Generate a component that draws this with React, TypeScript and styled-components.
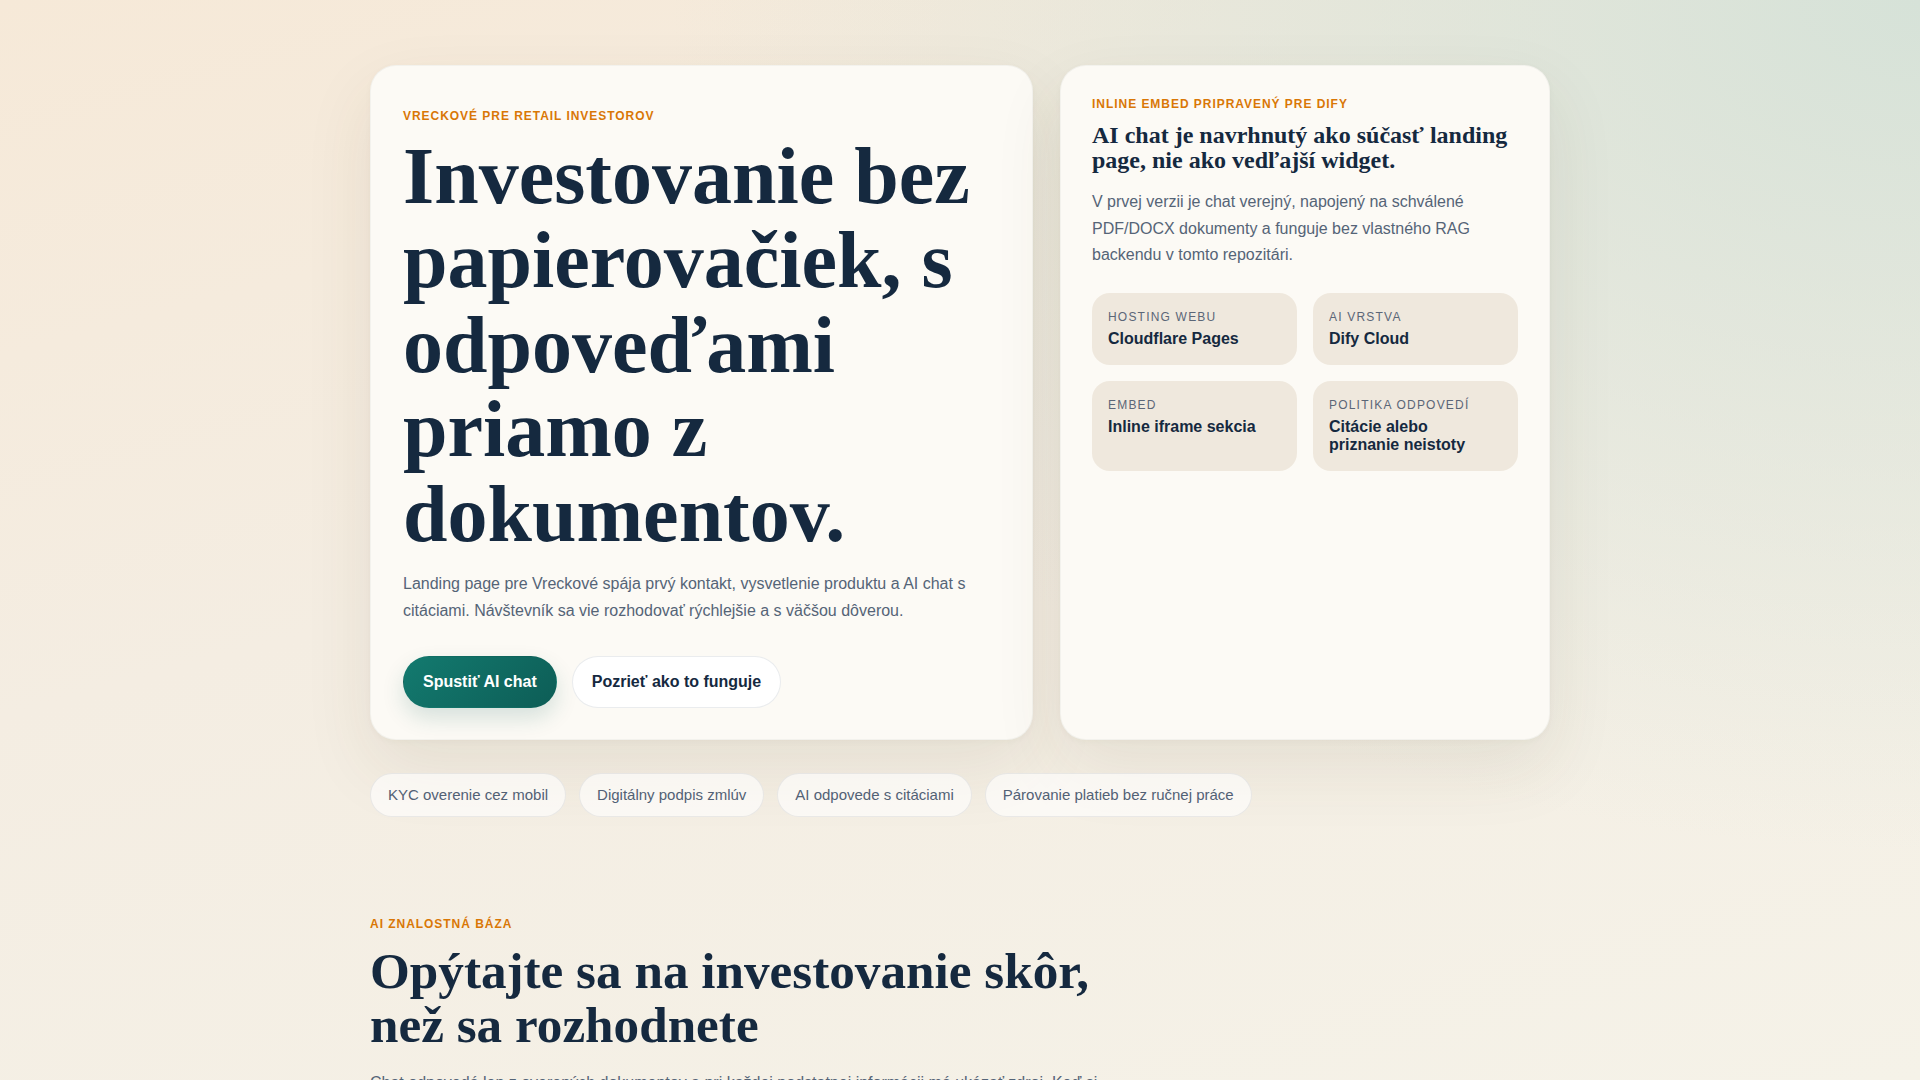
import styled, { createGlobalStyle } from "styled-components";

const Colors = {
  Navy: "#15293f",
  Slate: "#556477",
  Muted: "#5b6677",
  Orange: "#d97706",
  Card: "#fcfaf5",
  Fact: "#efe8dd",
};

const GlobalStyle = createGlobalStyle`
  * {
    box-sizing: border-box;
  }
  html, body {
    margin: 0;
    min-height: 100%;
  }
  body {
    font-family: "Liberation Sans", Arial, sans-serif;
    color: ${Colors.Navy};
    background:
      radial-gradient(ellipse 1250px 850px at 100% 0%, rgba(214, 226, 216, 1) 0%, rgba(214, 226, 216, 0) 100%),
      linear-gradient(165deg, #f6e9d8 0%, #f4ede2 45%, #f5f2e8 100%);
    background-attachment: fixed;
  }
`;

const facts = [
  { label: "Hosting webu", value: "Cloudflare Pages" },
  { label: "AI vrstva", value: "Dify Cloud" },
  { label: "Embed", value: "Inline iframe sekcia" },
  { label: "Politika odpovedí", value: "Citácie alebo priznanie neistoty" },
];

const chips = [
  "KYC overenie cez mobil",
  "Digitálny podpis zmlúv",
  "AI odpovede s citáciami",
  "Párovanie platieb bez ručnej práce",
];

export default function App() {
  return (
    <>
      <GlobalStyle />
      <Page>
        <Container>
          <HeroGrid>
            <HeroCard>
              <Eyebrow>Vreckové pre retail investorov</Eyebrow>
              <HeroTitle>
                Investovanie bez papierovačiek, s odpoveďami priamo z dokumentov.
              </HeroTitle>
              <Lead>
                Landing page pre Vreckové spája prvý kontakt, vysvetlenie produktu a AI chat s
                citáciami. Návštevník sa vie rozhodovať rýchlejšie a s väčšou dôverou.
              </Lead>
              <Actions>
                <Button variant="primary">Spustiť AI chat</Button>
                <Button variant="ghost">Pozrieť ako to funguje</Button>
              </Actions>
            </HeroCard>

            <SideCard>
              <Eyebrow>Inline embed pripravený pre Dify</Eyebrow>
              <SideTitle>AI chat je navrhnutý ako súčasť landing page, nie ako vedľajší widget.</SideTitle>
              <SideText>
                V prvej verzii je chat verejný, napojený na schválené PDF/DOCX dokumenty a funguje
                bez vlastného RAG backendu v tomto repozitári.
              </SideText>
              <FactGrid>
                {facts.map((fact) => (
                  <Fact key={fact.label}>
                    <FactLabel>{fact.label}</FactLabel>
                    <FactValue>{fact.value}</FactValue>
                  </Fact>
                ))}
              </FactGrid>
            </SideCard>
          </HeroGrid>

          <ChipRow>
            {chips.map((chip) => (
              <Chip key={chip}>{chip}</Chip>
            ))}
          </ChipRow>

          <KnowledgeSection>
            <Eyebrow>AI znalostná báza</Eyebrow>
            <SectionTitle>Opýtajte sa na investovanie skôr, než sa rozhodnete</SectionTitle>
            <SectionText>
              Chat odpovedá len z overených dokumentov a pri každej podstatnej informácii má ukázať
              zdroj. Keď si odpoveďou nie je istý, povie to otvorene a odporučí kontakt s tímom
              Vreckového.
            </SectionText>
          </KnowledgeSection>
        </Container>
      </Page>
    </>
  );
}

const Page = styled.main`
  min-height: 100vh;
  padding: 65px 0 120px;
`;

const Container = styled.div`
  width: 1180px;
  margin: 0 auto;
`;

const HeroGrid = styled.section`
  display: grid;
  grid-template-columns: 663px 1fr;
  gap: 27px;
  align-items: stretch;
`;

const Card = styled.div`
  background: ${Colors.Card};
  border: 1px solid rgba(23, 41, 63, 0.04);
  border-radius: 26px;
  box-shadow: 0 28px 70px rgba(74, 62, 38, 0.09), 0 2px 6px rgba(74, 62, 38, 0.03);
`;

const HeroCard = styled(Card)`
  padding: 43px 32px 31px;
`;

const SideCard = styled(Card)`
  padding: 31px;
`;

const Eyebrow = styled.p`
  margin: 0;
  font-size: 12px;
  line-height: 14px;
  font-weight: 700;
  letter-spacing: 0.08em;
  text-transform: uppercase;
  color: ${Colors.Orange};
`;

const HeroTitle = styled.h1`
  margin: 11px 0 15px;
  font-family: "Liberation Serif", "Times New Roman", serif;
  font-size: 80px;
  line-height: 1.056;
  font-weight: 700;
  color: ${Colors.Navy};
`;

const Lead = styled.p`
  margin: 0;
  font-size: 16px;
  line-height: 1.65;
  color: ${Colors.Slate};
`;

const Actions = styled.div`
  display: flex;
  gap: 15px;
  margin-top: 32px;
`;

const Button = styled.button<{ variant: "primary" | "ghost" }>`
  height: 52px;
  padding: 0 19px;
  border-radius: 999px;
  font-family: inherit;
  font-size: 16px;
  font-weight: 700;
  cursor: pointer;
  border: 1px solid
    ${({ variant }) => (variant === "primary" ? "transparent" : "rgba(23, 41, 63, 0.09)")};
  background: ${({ variant }) =>
    variant === "primary" ? "linear-gradient(135deg, #137a6f 0%, #0d5d56 100%)" : "#ffffff"};
  color: ${({ variant }) => (variant === "primary" ? "#ffffff" : Colors.Navy)};
  box-shadow: ${({ variant }) =>
    variant === "primary" ? "0 10px 22px rgba(13, 93, 86, 0.16)" : "none"};
`;

const SideTitle = styled.h2`
  margin: 12px 0 16px;
  font-family: "Liberation Serif", "Times New Roman", serif;
  font-size: 24px;
  line-height: 1.05;
  font-weight: 700;
  color: ${Colors.Navy};
`;

const SideText = styled.p`
  margin: 0;
  font-size: 16px;
  line-height: 1.65;
  color: ${Colors.Slate};
`;

const FactGrid = styled.div`
  display: grid;
  grid-template-columns: 1fr 1fr;
  gap: 16px;
  margin-top: 24px;
`;

const Fact = styled.div`
  background: ${Colors.Fact};
  border-radius: 18px;
  padding: 16px 16px 18px;
`;

const FactLabel = styled.div`
  font-size: 12px;
  line-height: 16px;
  letter-spacing: 0.1em;
  text-transform: uppercase;
  color: ${Colors.Muted};
`;

const FactValue = styled.div`
  margin-top: 5px;
  font-size: 16px;
  line-height: 1.1;
  font-weight: 700;
  color: ${Colors.Navy};
`;

const ChipRow = styled.div`
  display: flex;
  flex-wrap: wrap;
  gap: 13px;
  margin-top: 33px;
`;

const Chip = styled.span`
  padding: 10px 17px;
  border-radius: 999px;
  border: 1px solid rgba(23, 41, 63, 0.08);
  background: rgba(255, 255, 255, 0.62);
  font-size: 15px;
  line-height: 22px;
  color: #526175;
`;

const KnowledgeSection = styled.section`
  margin-top: 100px;
  max-width: 760px;
`;

const SectionTitle = styled.h2`
  margin: 13px 0 18px;
  font-family: "Liberation Serif", "Times New Roman", serif;
  font-size: 51.2px;
  line-height: 1.05;
  font-weight: 700;
  color: ${Colors.Navy};
`;

const SectionText = styled.p`
  margin: 0;
  font-size: 16px;
  line-height: 1.65;
  color: ${Colors.Slate};
`;
